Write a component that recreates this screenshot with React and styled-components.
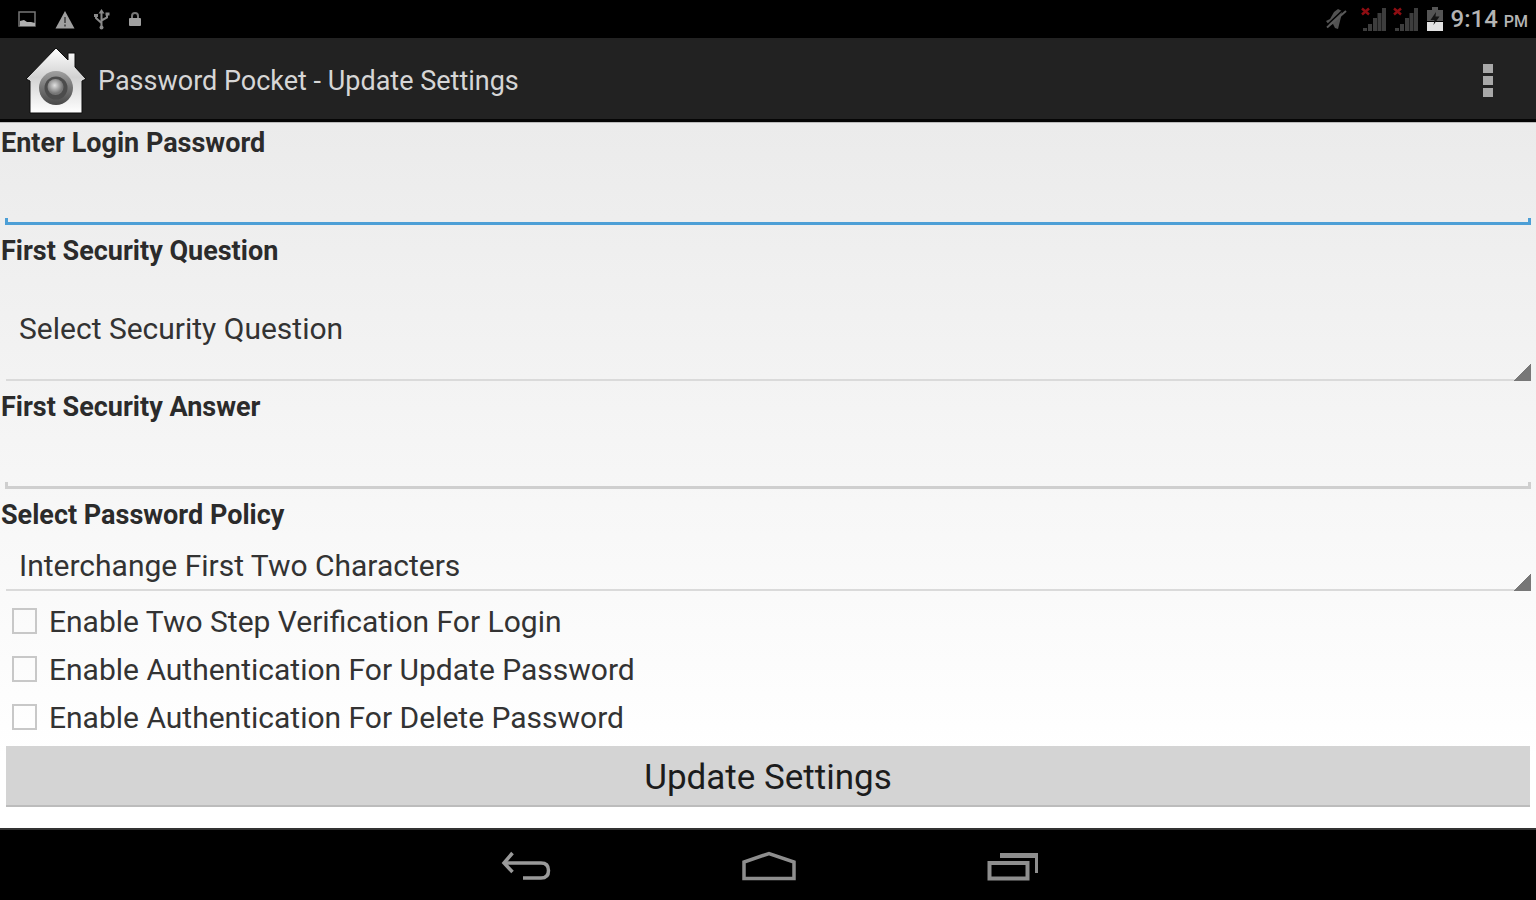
import { useState } from 'react';
import styled, { createGlobalStyle } from 'styled-components';

const questions = [
    'Select Security Question',
    'What was the name of your first pet?',
    'In which city were you born?',
];

const policies = [
    'Interchange First Two Characters',
    'Interchange Last Two Characters',
];

const options = [
    { id: 'twoStep', label: 'Enable Two Step Verification For Login' },
    { id: 'authUpdate', label: 'Enable Authentication For Update Password' },
    { id: 'authDelete', label: 'Enable Authentication For Delete Password' },
];

const PictureIcon = () => (
    <svg width="18" height="17" viewBox="0 0 18 17">
        <rect x="1" y="1" width="16" height="14" fill="none" stroke="#777" strokeWidth="1.500" />
        <path d="M2 10l4-1 3 2 4 0 4 1v3H2z" fill="#b0b0b0" />
    </svg>
);

const WarningIcon = () => (
    <svg width="20" height="19" viewBox="0 0 20 19">
        <path d="M10 1L19.500 18.500H.500z" fill="#a0a0a0" />
        <path d="M10 7v6M10 14.500v2" stroke="#555" strokeWidth="2" />
    </svg>
);

const UsbIcon = () => (
    <svg width="16" height="21" viewBox="0 0 16 21" fill="none" stroke="#8a8a8a" strokeWidth="2">
        <path d="M7.500 19V3M7.500 14L2 9V6M7.500 11.500L13 8.500V5" />
        <path d="M4.500 4.500L7.500 0l3 4.500z" fill="#8a8a8a" stroke="none" />
        <path d="M0 5h4v3H0zM11.500 3.500h4v3h-4z" fill="#8a8a8a" stroke="none" />
        <circle cx="7.500" cy="18.500" r="2" fill="#8a8a8a" stroke="none" />
    </svg>
);

const LockIcon = () => (
    <svg width="12" height="15" viewBox="0 0 12 15">
        <path d="M3 6.500V4a3 3 0 0 1 6 0v2.500" fill="none" stroke="#777" strokeWidth="2" />
        <rect y="6" width="12" height="8" rx="1" fill="#a0a0a0" />
    </svg>
);

const MutedIcon = () => (
    <svg width="22" height="22" viewBox="0 0 22 22">
        <path d="M1 13l4-2 4-7 4-3 4 2-1 6-2 8-1 4-3-1-2-4-4 1z" fill="#525252" />
        <path d="M1 18L19 1" stroke="#000" strokeWidth="1.500" />
        <path d="M2 19.500L21 3" stroke="#5a5a5a" strokeWidth="2" />
    </svg>
);

const SignalIcon = () => (
    <svg width="26" height="25" viewBox="0 0 26 25">
        <g fill="#3d3d3d">
            <rect x="2" y="21" width="4" height="3" />
            <rect x="7" y="17" width="4" height="7" />
            <rect x="12" y="11" width="4" height="13" />
            <rect x="16.500" y="6" width="4" height="18" />
            <rect x="21" y="1" width="4" height="23" />
        </g>
        <path d="M1 1.500l7 6M8 1.500l-7 6" stroke="#8e0d12" strokeWidth="2.500" />
    </svg>
);

const BatteryIcon = () => (
    <svg width="16" height="25" viewBox="0 0 16 25">
        <path d="M5 0h6v3h5v11H0V3h5z" fill="#555" />
        <path d="M0 15h16v9H0z" fill="#e2e2e2" />
        <path d="M9 5L3.500 13H7.500L6.500 18l6-8.500H8.500z" fill="#151515" />
    </svg>
);

const HouseIcon = () => (
    <svg width="60" height="68" viewBox="0 0 60 68">
        <defs>
            <linearGradient id="wall" x1="0" y1="0" x2="0" y2="1">
                <stop offset="0" stopColor="#ffffff" />
                <stop offset="0.45" stopColor="#d2d2d2" />
                <stop offset="1" stopColor="#ffffff" />
            </linearGradient>
            <linearGradient id="dial" x1="0" y1="0" x2="0" y2="1">
                <stop offset="0" stopColor="#a0a0a0" />
                <stop offset="1" stopColor="#484848" />
            </linearGradient>
            <radialGradient id="knob" cx="0.45" cy="0.4">
                <stop offset="0" stopColor="#e0e0e0" />
                <stop offset="1" stopColor="#777777" />
            </radialGradient>
        </defs>
        <path
            d="M30 1L42 13V6h7v14l11 12-4 2v32H4V34l-4-2z"
            fill="url(#wall)"
            stroke="#0c0c0c"
            strokeWidth="1"
        />
        <circle cx="30" cy="41" r="17" fill="url(#dial)" />
        <circle cx="30" cy="41" r="11.500" fill="#4c4c4c" />
        <circle cx="29.500" cy="40" r="8" fill="url(#knob)" />
    </svg>
);

const MoreIcon = () => (
    <svg width="12" height="36" viewBox="0 0 12 36" fill="#a9a9a9">
        <rect x="1" y="1" width="10" height="9" />
        <rect x="1" y="13" width="10" height="9" />
        <rect x="1" y="25" width="10" height="9" />
    </svg>
);

const BackIcon = () => (
    <svg width="52" height="30" viewBox="-2 0 52 30" fill="none" stroke="#9a9a9a" strokeWidth="3.500">
        <path d="M3 12H40Q47.500 12 47.500 19.500Q47.500 27 40 27H22" />
        <path d="M11.500 2L3 12L11.500 21" />
    </svg>
);

const HomeIcon = () => (
    <svg width="56" height="30" viewBox="0 0 56 30" fill="none" stroke="#8e8e8e" strokeWidth="3.500">
        <path d="M3 27.500V11L28 2.500L53 11V27.500z" />
    </svg>
);

const RecentIcon = () => (
    <svg width="52" height="30" viewBox="0 0 52 30" fill="none" stroke="#8e8e8e">
        <rect x="2.500" y="12" width="38" height="15.500" strokeWidth="4" />
        <path d="M13 4.500H50" strokeWidth="5" />
        <path d="M49.500 2V22" strokeWidth="3" />
    </svg>
);

const App = () => {
    const [password, setPassword] = useState('');
    const [answer, setAnswer] = useState('');
    const [checked, setChecked] = useState({});

    const toggle = (id) => setChecked({ ...checked, [id]: !checked[id] });

    return (
        <Screen>
            <GlobalStyle />
            <StatusBar>
                <Notifications>
                    <PictureIcon />
                    <WarningIcon />
                    <UsbIcon />
                    <LockIcon />
                </Notifications>
                <SystemStatus>
                    <MutedIcon />
                    <Signals>
                        <SignalIcon />
                        <SignalIcon />
                    </Signals>
                    <BatteryIcon />
                    <Clock>9:14 <small>PM</small></Clock>
                </SystemStatus>
            </StatusBar>

            <ActionBar>
                <HouseIcon />
                <Title>Password Pocket - Update Settings</Title>
                <IconButton aria-label="More options">
                    <MoreIcon />
                </IconButton>
            </ActionBar>

            <Settings onSubmit={(e) => e.preventDefault()}>
                <Label htmlFor="password">Enter Login Password</Label>
                <TextField
                    id="password"
                    type="password"
                    $active
                    value={password}
                    onChange={(e) => setPassword(e.target.value)}
                />

                <Label htmlFor="question">First Security Question</Label>
                <Spinner id="question" $tall>
                    {questions.map((q) => <option key={q}>{q}</option>)}
                </Spinner>

                <Label htmlFor="answer">First Security Answer</Label>
                <TextField
                    id="answer"
                    type="text"
                    value={answer}
                    onChange={(e) => setAnswer(e.target.value)}
                />

                <Label htmlFor="policy">Select Password Policy</Label>
                <Spinner id="policy">
                    {policies.map((p) => <option key={p}>{p}</option>)}
                </Spinner>

                {options.map(({ id, label }) => (
                    <CheckRow key={id} htmlFor={id}>
                        <CheckBox
                            id={id}
                            type="checkbox"
                            checked={!!checked[id]}
                            onChange={() => toggle(id)}
                        />
                        {label}
                    </CheckRow>
                ))}

                <SubmitButton type="submit">Update Settings</SubmitButton>
            </Settings>

            <NavBar>
                <IconButton aria-label="Back"><BackIcon /></IconButton>
                <IconButton aria-label="Home"><HomeIcon /></IconButton>
                <IconButton aria-label="Recent apps"><RecentIcon /></IconButton>
            </NavBar>
        </Screen>
    );
};

export default App;

const GlobalStyle = createGlobalStyle`
    * {
        box-sizing: border-box;
    }

    body {
        margin: 0;
        font-family: Roboto, sans-serif;
    }

    svg {
        display: block;
        flex: none;
    }

    input, select, button {
        font-family: inherit;
    }
`;

const Screen = styled.div`
    display: flex;
    flex-direction: column;
    min-height: 100vh;
    background: #000;
`;

const StatusBar = styled.div`
    display: flex;
    align-items: center;
    justify-content: space-between;
    height: 38px;
    padding: 0 8px 0 18px;
`;

const Notifications = styled.div`
    display: flex;
    align-items: center;
    gap: 19px;
`;

const SystemStatus = styled.div`
    display: flex;
    align-items: center;
    gap: 8px;
`;

const Signals = styled.div`
    display: flex;
    gap: 6px;
    padding-left: 6px;
`;

const Clock = styled.span`
    padding-top: 2px;
    color: #b4b4b4;
    font-size: 24px;
    font-weight: 500;
    line-height: 36px;

    small {
        font-size: 16px;
    }
`;

const ActionBar = styled.header`
    display: flex;
    align-items: center;
    height: 84px;
    padding: 4px 42px 0 26px;
    background: #222;
    border-bottom: 3px solid #050505;
`;

const Title = styled.h1`
    flex: 1;
    margin: 0;
    padding-left: 12px;
    color: #d6d6d6;
    font-size: 27px;
    font-weight: 400;
`;

const IconButton = styled.button`
    display: flex;
    align-items: center;
    justify-content: center;
    padding: 0;
    border: none;
    background: none;
    cursor: pointer;
`;

const Settings = styled.form`
    flex: 1;
    display: flex;
    flex-direction: column;
    padding-bottom: 20px;
    background: linear-gradient(#ebebeb, #fff 90%);
    border-top: 1px solid #bbb;
`;

const Label = styled.label`
    padding-left: 1px;
    color: #2b2b2b;
    font-size: 27px;
    font-weight: 700;
    line-height: 40px;
`;

/* underline with a short tick standing up at each end */
const TextField = styled.input`
    --line: ${({ $active }) => ($active ? '#4d9fd6' : '#cfcfcf')};
    height: 62px;
    margin: 0 5px 6px;
    padding: 0 12px;
    border: none;
    border-radius: 0;
    outline: none;
    background:
        linear-gradient(var(--line), var(--line)) bottom / 100% 3px no-repeat,
        linear-gradient(var(--line), var(--line)) left bottom / 3px 7px no-repeat,
        linear-gradient(var(--line), var(--line)) right bottom / 3px 7px no-repeat;
    color: #222;
    font-size: 30px;
`;

/* thin underline that ends in a corner triangle */
const Spinner = styled.select`
    appearance: none;
    height: ${({ $tall }) => ($tall ? '110px' : '56px')};
    margin: 0 5px 6px 6px;
    padding: 4px 0 0 13px;
    border: none;
    border-radius: 0;
    outline: none;
    background:
        linear-gradient(135deg, transparent 50%, #777 50%) right bottom / 17px 18px no-repeat,
        linear-gradient(#dadada, #dadada) bottom / 100% 2px no-repeat;
    color: #333;
    font-size: 30px;
`;

const CheckRow = styled.label`
    display: flex;
    align-items: center;
    gap: 12px;
    height: 48px;
    padding-left: 12px;
    color: #333;
    font-size: 30px;
`;

const CheckBox = styled.input`
    appearance: none;
    width: 25px;
    height: 26px;
    margin: 0;
    border: 2px solid #c8c8c8;
    background: transparent;

    &:checked {
        background: #4d9fd6;
    }
`;

const SubmitButton = styled.button`
    height: 61px;
    margin: 5px 6px 0;
    padding-top: 4px;
    border: none;
    border-bottom: 2px solid #bcbcbc;
    background: #d4d4d4;
    color: #1c1c1c;
    font-size: 35px;
    cursor: pointer;
`;

const NavBar = styled.nav`
    display: flex;
    align-items: center;
    justify-content: center;
    gap: 190px;
    height: 72px;
    padding: 2px 0 0 2px;
    border-top: 2px solid #333;
`;
